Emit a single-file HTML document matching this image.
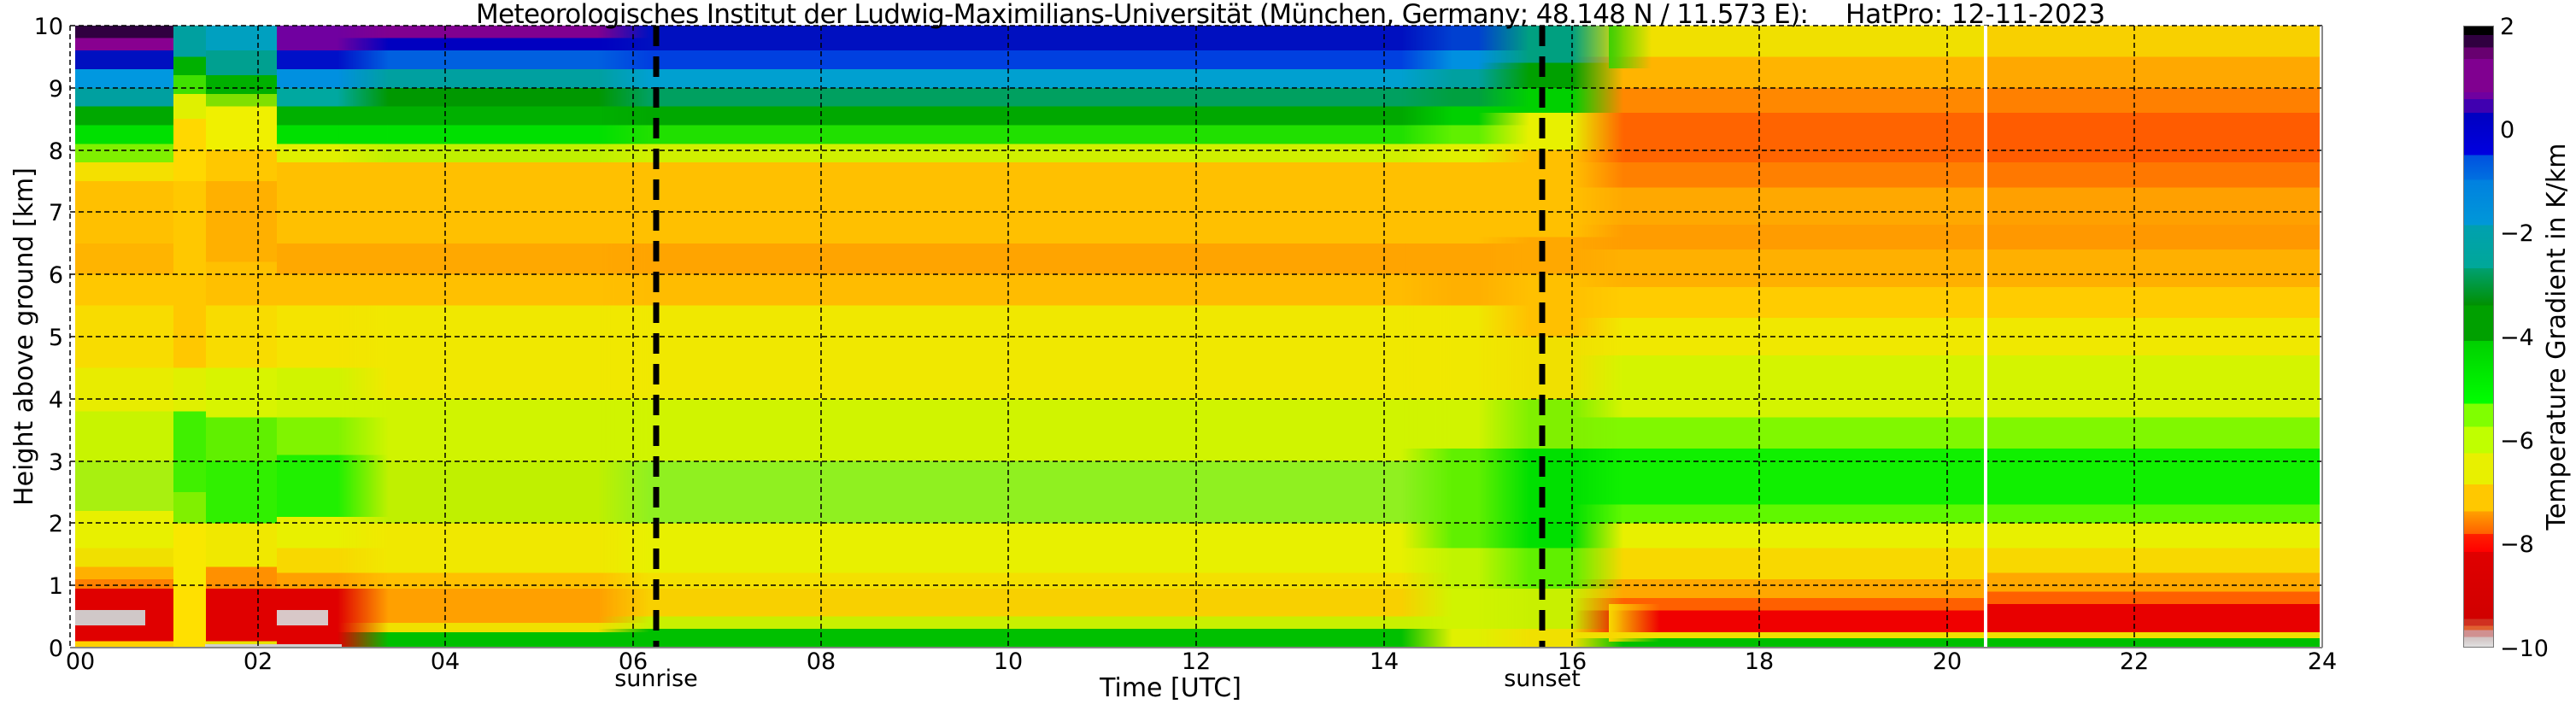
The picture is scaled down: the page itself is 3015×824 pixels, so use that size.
<!DOCTYPE html>
<html><head><meta charset="utf-8"><style>
html,body{margin:0;padding:0;background:#fff;}
#wrap{position:relative;width:3015px;height:824px;overflow:hidden;background:#fff;}
.c{position:absolute;top:30px;height:728px;}
.b{-webkit-mask-image:linear-gradient(to right,transparent 0,#000 60px);mask-image:linear-gradient(to right,transparent 0,#000 60px);}
svg{position:absolute;left:0;top:0;}
</style></head><body><div id="wrap">
<div class="c" style="left:88px;width:115px;background:linear-gradient(to top,#ffd000 0 1%,#e00000 1% 9.5%,#ff8000 9.5% 11%,#ffb000 11% 13%,#f0e000 13% 16%,#e8f000 16% 22%,#a8f010 22% 30%,#c8f400 30% 38%,#e8ec00 38% 45%,#f8dc00 45% 55%,#ffc800 55% 60%,#ffb400 60% 65%,#ffc000 65% 75%,#f4e000 75% 78%,#80f000 78% 81%,#00e000 81% 84%,#00a800 84% 87%,#00a0a0 87% 90%,#0098e0 90% 93%,#0010c0 93% 96%,#880090 96% 98%,#300040 98% 100%)"></div>
<div class="c" style="left:203px;width:38px;background:linear-gradient(to top,#ffe000 0 10%,#f8e800 10% 20%,#80f000 20% 25%,#40f000 25% 38%,#e0f000 38% 45%,#ffc800 45% 75%,#ffd800 75% 85%,#e0f000 85% 89%,#40e000 89% 92%,#00b000 92% 95%,#00a0a0 95% 100%)"></div>
<div class="c" style="left:241px;width:83px;background:linear-gradient(to top,#e8e000 0 1%,#e00000 1% 9.5%,#ff9000 9.5% 13%,#f0e800 13% 20%,#30f000 20% 30%,#60f000 30% 37%,#d8f400 37% 45%,#f8dc00 45% 55%,#ffc000 55% 62%,#ffb000 62% 75%,#ffc800 75% 80%,#f0f000 80% 87%,#80e000 87% 89%,#00b000 89% 92%,#00a090 92% 96%,#00a0c0 96% 100%)"></div>
<div class="c" style="left:324px;width:131px;background:linear-gradient(to top,#e00000 0 9.5%,#ffa000 9.5% 12%,#f8d800 12% 16%,#e8f000 16% 21%,#20f000 21% 31%,#80f400 31% 37%,#d0f400 37% 45%,#f4e400 45% 55%,#ffc000 55% 60%,#ffa800 60% 65%,#ffc000 65% 78%,#e0f000 78% 81%,#00e000 81% 84%,#00b000 84% 87%,#00a8a0 87% 90%,#0090e0 90% 93%,#0010c8 93% 96%,#7000a0 96% 100%)"></div>
<div class="c b" style="left:395px;width:365px;background:linear-gradient(to top,#00c000 0 2.5%,#f0e000 2.5% 4%,#ffa000 4% 9.5%,#ffc000 9.5% 12%,#f0e800 12% 20%,#c0f000 20% 30%,#d0f400 30% 40%,#f0e800 40% 55%,#ffc000 55% 60%,#ffa800 60% 65%,#ffc000 65% 78%,#c0f000 78% 81%,#00e000 81% 84%,#00b000 84% 87%,#009800 87% 90%,#00a0a0 90% 93%,#0060e0 93% 96%,#0000c0 96% 98%,#800090 98% 100%)"></div>
<div class="c b" style="left:700px;width:1000px;background:linear-gradient(to top,#00c000 0 3%,#c8f000 3% 5%,#f8d000 5% 9.5%,#f4e000 9.5% 12%,#e8f000 12% 20%,#90f020 20% 30%,#d0f400 30% 40%,#f0e800 40% 55%,#ffbc00 55% 60%,#ffa400 60% 65%,#ffc000 65% 78%,#d0f000 78% 81%,#20e000 81% 84%,#00a800 84% 87%,#00a060 87% 90%,#00a0d0 90% 93%,#0040e0 93% 96%,#0010c0 96% 100%)"></div>
<div class="c b" style="left:1640px;width:150px;background:linear-gradient(to top,#e0f000 0 3%,#d0f400 3% 9.5%,#c0f400 9.5% 16%,#60f000 16% 32%,#d0f400 32% 40%,#f0e800 40% 55%,#ffb000 55% 60%,#ffa400 60% 65%,#ffc000 65% 78%,#e0f000 78% 81%,#60f000 81% 84%,#00d000 84% 87%,#00a040 87% 90%,#00a0a0 90% 93%,#0090e0 93% 96%,#0040d0 96% 100%)"></div>
<div class="c b" style="left:1730px;width:170px;background:linear-gradient(to top,#f0e000 0 3%,#c8f000 3% 9.5%,#60f000 9.5% 16%,#00e000 16% 32%,#80f000 32% 40%,#f0e000 40% 50%,#ffc000 50% 60%,#ffa800 60% 66%,#ffc000 66% 80%,#e8f000 80% 86%,#00d000 86% 90%,#00a000 90% 94%,#00a080 94% 100%)"></div>
<div class="c b" style="left:1840px;width:482px;background:linear-gradient(to top,#00c000 0 1.5%,#f0e000 1.5% 2.5%,#f00000 2.5% 6%,#ff6000 6% 8%,#ffa800 8% 11%,#f8d800 11% 16%,#e8f000 16% 20%,#60f800 20% 23%,#10f000 23% 32%,#80f800 32% 37%,#d4f400 37% 47%,#f0e800 47% 53%,#ffcc00 53% 58%,#ffb000 58% 64%,#ff9c00 64% 68%,#ffa800 68% 74%,#ff8000 74% 78%,#ff6400 78% 86%,#ff8800 86% 90%,#ffb400 90% 95%,#f0e000 95% 100%)"></div>
<div class="c" style="left:2326px;width:389px;background:linear-gradient(to top,#00c000 0 1.5%,#f0e000 1.5% 2.5%,#e80000 2.5% 7%,#ff6000 7% 9%,#ffa800 9% 12%,#f8d800 12% 16%,#e8f000 16% 20%,#60f800 20% 23%,#10f000 23% 32%,#80f800 32% 37%,#d4f400 37% 47%,#f0e800 47% 53%,#ffcc00 53% 58%,#ffb000 58% 64%,#ff9800 64% 68%,#ffa000 68% 74%,#ff7800 74% 78%,#ff5c00 78% 86%,#ff8000 86% 90%,#ffa800 90% 95%,#f8d000 95% 100%)"></div>
<div style="position:absolute;left:1883px;top:707px;width:60px;height:44px;background:linear-gradient(to right,#f8d800,rgba(248,216,0,0))"></div>
<div style="position:absolute;left:1883px;top:30px;width:50px;height:50px;background:linear-gradient(to right,#40d000,rgba(240,224,0,0))"></div>
<div style="position:absolute;left:88px;top:714px;width:82px;height:18px;background:#d0c8c8"></div>
<div style="position:absolute;left:324px;top:714px;width:60px;height:18px;background:#d8c8c8"></div>
<div style="position:absolute;left:240px;top:754px;width:160px;height:4px;background:#d0d0d0"></div>
<div style="position:absolute;left:2883px;top:30px;width:36px;height:728px;background:linear-gradient(to bottom,#000 0 1.4%,#300040 1.4% 3.4%,#680070 3.4% 5.2%,#800090 5.2% 10.6%,#7000a0 10.6% 11.7%,#4000b0 11.7% 13.9%,#0000c0 13.9%,#0000e0 20.7%,#0050e0 20.7%,#0070e0 24.7%,#0080e0 24.7%,#0098d8 32%,#00a0b0 32%,#00a898 39%,#00a070 39%,#009000 45%,#00a000 45% 50.7%,#00d000 50.7%,#00ff00 60.8%,#80ff00 60.8% 64.5%,#c0ff00 64.5% 68.8%,#e8f000 68.8% 73.8%,#ffc800 73.8% 78.2%,#ffa000 78.2%,#ff6000 81.8%,#ff2000 81.8%,#ff0000 84.7%,#e00000 84.7%,#d00000 95.5%,#d03020 95.5% 96.6%,#e06030 96.6% 97.3%,#d09090 97.3% 98.4%,#d0c0c0 98.4%,#e0e0e0 100%);border:1px solid #777;box-sizing:border-box"></div>
<svg width="3015" height="824" font-family="DejaVu Sans, Liberation Sans, sans-serif">
<g stroke="#000" stroke-width="1.5" stroke-dasharray="6,4">
<line x1="302" y1="30" x2="302" y2="758"/><line x1="521" y1="30" x2="521" y2="758"/><line x1="741" y1="30" x2="741" y2="758"/><line x1="961" y1="30" x2="961" y2="758"/><line x1="1180" y1="30" x2="1180" y2="758"/><line x1="1400" y1="30" x2="1400" y2="758"/><line x1="1620" y1="30" x2="1620" y2="758"/><line x1="1840" y1="30" x2="1840" y2="758"/><line x1="2059" y1="30" x2="2059" y2="758"/><line x1="2279" y1="30" x2="2279" y2="758"/><line x1="2498" y1="30" x2="2498" y2="758"/>
<line x1="82" y1="103" x2="2718" y2="103"/><line x1="82" y1="176" x2="2718" y2="176"/><line x1="82" y1="248" x2="2718" y2="248"/><line x1="82" y1="321" x2="2718" y2="321"/><line x1="82" y1="394" x2="2718" y2="394"/><line x1="82" y1="467" x2="2718" y2="467"/><line x1="82" y1="540" x2="2718" y2="540"/><line x1="82" y1="612" x2="2718" y2="612"/><line x1="82" y1="685" x2="2718" y2="685"/>
<line x1="82" y1="30" x2="2718" y2="30"/><line x1="82" y1="30" x2="82" y2="758"/>
</g>
<line x1="2324" y1="30" x2="2324" y2="758" stroke="#fff" stroke-width="4"/>
<g stroke="#000" stroke-width="7" stroke-dasharray="24,12">
<line x1="768" y1="30" x2="768" y2="758"/><line x1="1805" y1="30" x2="1805" y2="758"/>
</g>
<line x1="82" y1="758" x2="2718" y2="758" stroke="#888" stroke-width="2"/>
<line x1="2718" y1="30" x2="2718" y2="758" stroke="#888" stroke-width="2"/>
<text x="557" y="27" font-size="31" textLength="1560" lengthAdjust="spacing">Meteorologisches Institut der Ludwig-Maximilians-Universität (München, Germany; 48.148 N / 11.573 E):</text>
<text x="2160" y="27" font-size="31">HatPro: 12-11-2023</text>
<g font-size="27" text-anchor="end">
<text x="74" y="40">10</text><text x="74" y="113">9</text><text x="74" y="186">8</text><text x="74" y="258">7</text><text x="74" y="331">6</text><text x="74" y="404">5</text><text x="74" y="477">4</text><text x="74" y="550">3</text><text x="74" y="622">2</text><text x="74" y="695">1</text><text x="74" y="768">0</text>
</g>
<g font-size="27" text-anchor="middle">
<text x="94" y="783">00</text><text x="302" y="783">02</text><text x="521" y="783">04</text><text x="741" y="783">06</text><text x="961" y="783">08</text><text x="1180" y="783">10</text><text x="1400" y="783">12</text><text x="1620" y="783">14</text><text x="1840" y="783">16</text><text x="2059" y="783">18</text><text x="2279" y="783">20</text><text x="2498" y="783">22</text><text x="2718" y="783">24</text>
<text x="768" y="803">sunrise</text><text x="1805" y="803">sunset</text>
<text x="1370" y="815" font-size="30">Time [UTC]</text>
</g>
<text transform="translate(38,394) rotate(-90)" font-size="30" text-anchor="middle">Height above ground [km]</text>
<g font-size="27">
<text x="2926" y="40">2</text><text x="2926" y="161">0</text><text x="2926" y="282">−2</text><text x="2926" y="404">−4</text><text x="2926" y="525">−6</text><text x="2926" y="646">−8</text><text x="2926" y="768">−10</text>
</g>
<text transform="translate(3002,394) rotate(-90)" font-size="30" text-anchor="middle">Temperature Gradient in K/km</text>
</svg>
</div></body></html>
